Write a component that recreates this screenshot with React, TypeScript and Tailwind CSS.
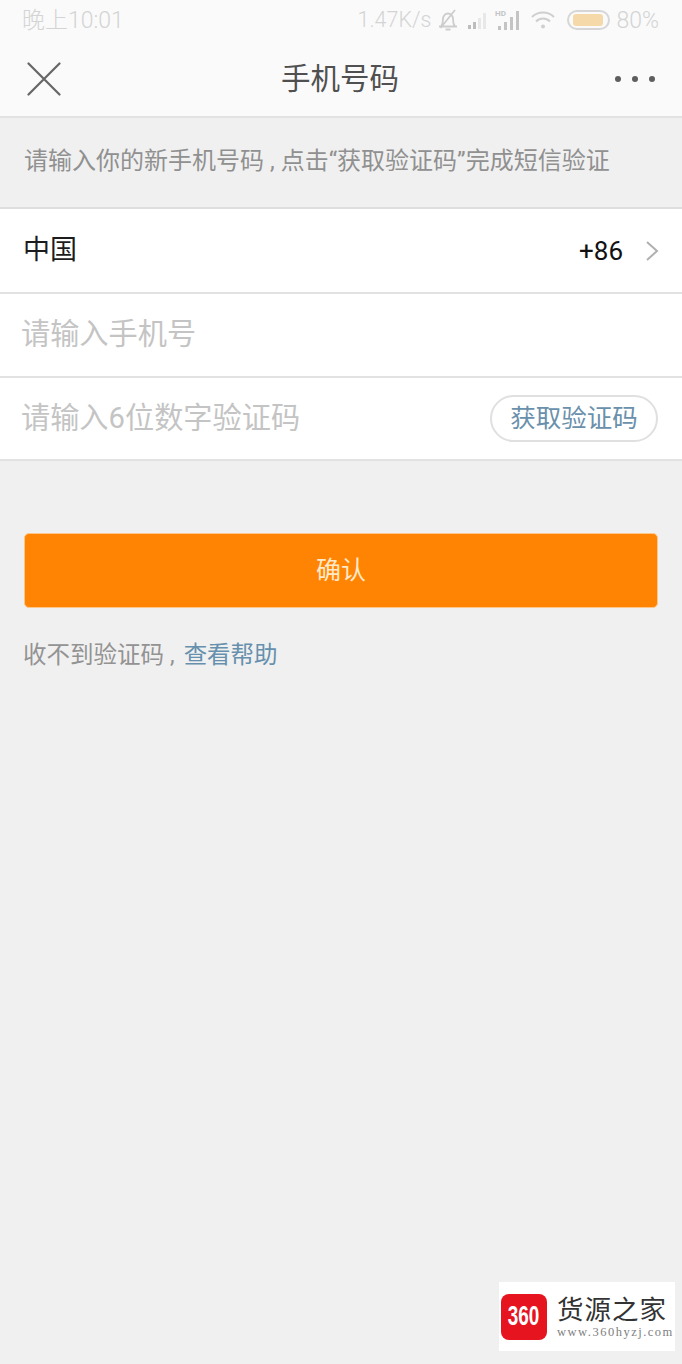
import React from "react";

const cjk = "font-['Roboto','Noto_Sans_CJK_SC',sans-serif]";

function StatusIcons() {
  return (
    <div className="flex items-center">
      <svg width="22" height="24" viewBox="0 0 22 24" fill="none" stroke="#cdcdcd" strokeWidth="1.800" className="ml-[6px]">
        <path d="M2 18.500h18M4 18.500c1.500-2 2-4 2-7.500 0-3 2.200-5.500 5-5.500s5 2.500 5 5.500c0 3.500.5 5.500 2 7.500M8.500 21.500h5M3.500 20L18 2" />
      </svg>
      <svg width="22" height="20" viewBox="0 0 22 20" className="ml-[8px]">
        <rect x="1" y="15" width="3" height="4" fill="#bdbdbd" />
        <rect x="6" y="12" width="3" height="7" fill="#bdbdbd" />
        <rect x="11" y="8" width="3" height="11" fill="#e8e8e8" />
        <rect x="16" y="3" width="3" height="16" fill="#e8e8e8" />
      </svg>
      <svg width="26" height="24" viewBox="0 0 26 24" className="ml-[6px]">
        <text x="0" y="8" fontSize="8" fontWeight="700" fill="#c4c4c4" fontFamily="Roboto">HD</text>
        <rect x="3" y="18" width="3" height="4" fill="#c4c4c4" />
        <rect x="9" y="14" width="3" height="8" fill="#c4c4c4" />
        <rect x="15" y="9" width="3" height="13" fill="#c4c4c4" />
        <rect x="21" y="3" width="3" height="19" fill="#c4c4c4" />
      </svg>
      <svg width="26" height="22" viewBox="0 0 26 22" fill="none" stroke="#cfcfcf" strokeWidth="2" className="ml-[9px]">
        <path d="M2 8c6-6 16-6 22 0M6 12.500c4-4 10-4 14 0" />
        <circle cx="13" cy="17.500" r="2" fill="#cfcfcf" stroke="none" />
      </svg>
      <div className="ml-[11px] flex h-[20px] w-[43px] items-center rounded-full border-2 border-[#d6d6d6] px-[4px]">
        <div className="h-[12px] w-[30px] rounded-[3px] bg-[#f6d9a8]" />
      </div>
      <span className="ml-[6px] text-[23px] font-light leading-none text-[#d4d4d4]">80%</span>
    </div>
  );
}

export default function App() {
  return (
    <div className={`relative flex h-[1364px] w-[682px] flex-col overflow-hidden bg-[#f0f0f0] ${cjk}`}>
      <div className="h-[118px] shrink-0 border-b-2 border-[#e2e2e2] bg-[#fafafa]">
        <div className="flex h-[40px] items-center justify-between pl-[22px] pr-[23px]">
          <span className="text-[23px] font-light leading-none text-[#d4d4d4]">晚上10:01</span>
          <div className="flex items-center">
            <span className="text-[21.500px] font-light leading-none text-[#d4d4d4]">1.47K/s</span>
            <StatusIcons />
          </div>
        </div>
        <div className="flex h-[76px] items-center justify-between pl-[27px] pr-[27px] pt-[2px]">
          <svg width="34" height="34" viewBox="0 0 34 34" fill="none" stroke="#666666" strokeWidth="2.200" strokeLinecap="round">
            <path d="M1.500 1.500L32.500 32.500M32.500 1.500L1.500 32.500" />
          </svg>
          <span className="ml-[4px] mt-[2px] text-[29.500px] leading-none text-[#505050]">手机号码</span>
          <div className="flex items-center gap-[11px]">
            <span className="h-[6px] w-[6px] rounded-full bg-[#5e5e5e]" />
            <span className="h-[6px] w-[6px] rounded-full bg-[#5e5e5e]" />
            <span className="h-[6px] w-[6px] rounded-full bg-[#5e5e5e]" />
          </div>
        </div>
      </div>

      <div className="flex h-[89px] shrink-0 items-center pb-[3px] pl-[24px] text-[24px] leading-none text-[#909090]">
        请输入你的新手机号码 , 点击“获取验证码”完成短信验证
      </div>

      <div className="shrink-0 border-t-2 border-[#dedede] bg-white">
        <div className="flex h-[85px] items-center justify-between border-b-2 border-[#e2e2e2] pl-[23px] pr-[23px]">
          <span className="text-[27px] leading-none text-[#1c1c1c]">中国</span>
          <div className="flex items-center">
            <span className="ml-[2px] text-[26px] leading-none text-[#111111]">+86</span>
            <svg width="14" height="22" viewBox="0 0 14 22" fill="none" stroke="#b0b0b0" strokeWidth="2" className="ml-[22px]">
              <path d="M2 2l10 9-10 9" />
            </svg>
          </div>
        </div>
        <div className="flex h-[84px] items-center border-b-2 border-[#e2e2e2] pl-[21px]">
          <span className="text-[29.200px] leading-none text-[#c4c4c4]">请输入手机号</span>
        </div>
        <div className="flex h-[83px] items-center justify-between border-b-2 border-[#e2e2e2] pl-[21px] pr-[24px]">
          <span className="text-[29.200px] leading-none text-[#c4c4c4]">请输入6位数字验证码</span>
          <button className="flex h-[47px] w-[168px] items-center justify-center rounded-full border-2 border-[#e0e0e0] bg-white text-[25.500px] leading-none text-[#6a90ab]">
            获取验证码
          </button>
        </div>
      </div>

      <button className="mx-[24px] mt-[72px] flex h-[75px] w-[634px] shrink-0 items-center justify-center rounded-[5px] border border-[#ffc68a] bg-[#ff8403] text-[25px] leading-none text-[#ffe9c9]">
        确认
      </button>

      <div className="ml-[23px] mt-[33px] text-[23.500px] leading-[28px] text-[#939393]">
        收不到验证码<span className="ml-[6px] mr-[9px]">,</span><span className="text-[#6690ad]">查看帮助</span>
      </div>

      <div className="absolute left-[499px] top-[1282px] flex h-[69px] w-[176px] items-center bg-white">
        <div className="ml-[2px] flex h-[46px] w-[46px] shrink-0 items-center justify-center rounded-[8px] bg-[#e5141f] font-['Liberation_Sans',sans-serif] text-[27px] font-bold leading-none text-white">
          <span className="scale-x-[0.7]">360</span>
        </div>
        <div className="ml-[10px] flex min-w-0 flex-col">
          <span className="whitespace-nowrap font-['Liberation_Serif','Noto_Sans_CJK_SC',serif] text-[26.500px] leading-[30px] tracking-[1px] text-[#333333]">货源之家</span>
          <span className="whitespace-nowrap font-['Liberation_Serif',serif] text-[12.500px] leading-[14px] tracking-[1.500px] text-[#808080]">www.360hyzj.com</span>
        </div>
      </div>
    </div>
  );
}
